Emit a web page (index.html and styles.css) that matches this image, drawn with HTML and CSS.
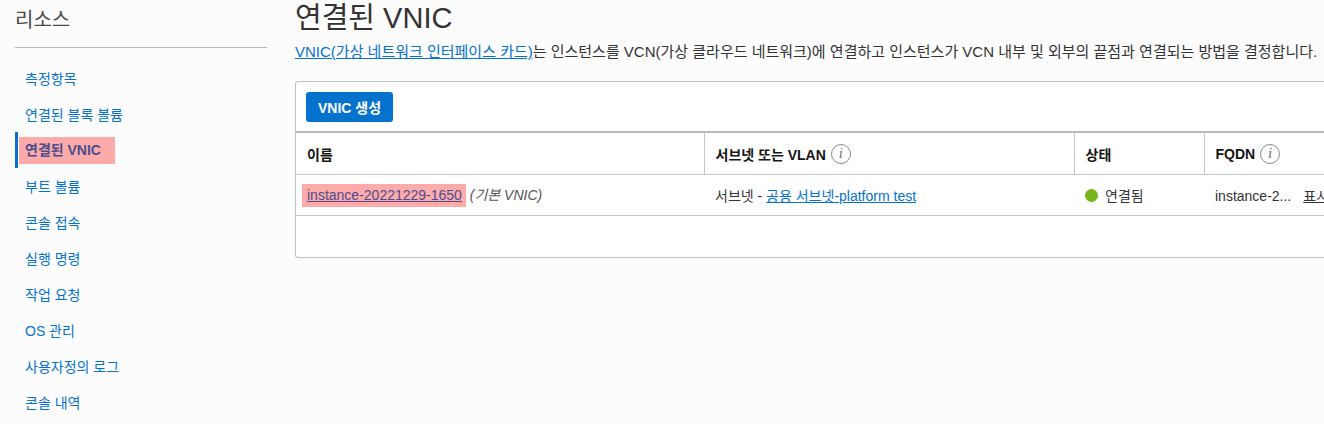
FILE: index.html
```html
<!DOCTYPE html>
<html lang="ko">
<head>
<meta charset="utf-8">
<title>연결된 VNIC</title>
<link rel="stylesheet" href="styles.css">
</head>
<body>
<div class="page">
  <aside class="sidebar">
    <h2 class="side-title">리소스</h2>
    <ul class="nav">
      <li class="nav-item"><a href="#">측정항목</a></li>
      <li class="nav-item"><a href="#">연결된 블록 볼륨</a></li>
      <li class="nav-item active"><a href="#"><span class="hl">연결된 VNIC</span></a></li>
      <li class="nav-item"><a href="#">부트 볼륨</a></li>
      <li class="nav-item"><a href="#">콘솔 접속</a></li>
      <li class="nav-item"><a href="#">실행 명령</a></li>
      <li class="nav-item"><a href="#">작업 요청</a></li>
      <li class="nav-item"><a href="#">OS 관리</a></li>
      <li class="nav-item"><a href="#">사용자정의 로그</a></li>
      <li class="nav-item"><a href="#">콘솔 내역</a></li>
    </ul>
  </aside>
  <main class="main">
    <h1 class="title">연결된 VNIC</h1>
    <p class="desc"><a href="#">VNIC(가상 네트워크 인터페이스 카드)</a>는 인스턴스를 VCN(가상 클라우드 네트워크)에 연결하고 인스턴스가 VCN 내부 및 외부의 끝점과 연결되는 방법을 결정합니다.</p>
    <section class="card">
      <div class="toolbar"><button class="btn">VNIC 생성</button></div>
      <table class="grid">
        <colgroup>
          <col class="c-name"><col class="c-subnet"><col class="c-state"><col class="c-fqdn">
        </colgroup>
        <thead>
          <tr>
            <th>이름</th>
            <th><span class="th-in">서브넷 또는 VLAN <span class="info">i</span></span></th>
            <th>상태</th>
            <th><span class="th-in">FQDN <span class="info">i</span></span></th>
          </tr>
        </thead>
        <tbody>
          <tr>
            <td><a href="#" class="hl-link">instance-20221229-1650</a> <em class="note">(기본 VNIC)</em></td>
            <td>서브넷 - <a href="#">공용 서브넷-platform test</a></td>
            <td><span class="state"><span class="dot"></span>연결됨</span></td>
            <td><span class="fqdn">instance-2...</span><a href="#" class="show">표시</a></td>
          </tr>
          <tr class="empty"><td colspan="4"></td></tr>
        </tbody>
      </table>
    </section>
  </main>
</div>
</body>
</html>
```
FILE: styles.css
```css
html, body {
  margin: 0;
  padding: 0;
  background: #fcfcfc;
  overflow: hidden;
}
body {
  font-family: "Liberation Sans", Arial, "Noto Sans CJK KR", sans-serif;
  font-size: 14px;
  color: #333333;
  width: 1324px;
  height: 424px;
}
a { color: #0572ce; }
.page {
  display: flex;
  align-items: flex-start;
}
.sidebar {
  width: 252px;
  margin-left: 15px;
  flex: none;
}
.side-title {
  margin: 0;
  padding-top: 8px;
  font-size: 20px;
  font-weight: normal;
  line-height: 24px;
  color: #4a4a4a;
  padding-bottom: 15px;
  border-bottom: 1px solid #b6bcc5;
}
.nav {
  list-style: none;
  margin: 12px 0 0;
  padding: 0;
}
.nav-item {
  height: 36px;
  display: flex;
  align-items: center;
  padding-left: 7px;
  border-left: 3px solid transparent;
}
.nav-item a {
  text-decoration: none;
  color: #0572ce;
  font-size: 14px;
}
.nav-item.active {
  border-left-color: #0572ce;
}
.nav-item.active a {
  font-weight: bold;
  color: #4b4d8c;
}
.hl {
  display: inline-block;
  background: #fdaaab;
  line-height: 27px;
  margin-left: -6px;
  padding: 0 14px 0 6px;
}
.main {
  margin-left: 28px;
  flex: none;
  width: 1100px;
}
.title {
  margin: 0;
  padding-top: 1px;
  font-size: 29px;
  line-height: 34px;
  font-weight: normal;
  color: #333333;
}
.desc {
  margin: 7px 0 0;
  font-size: 15px;
  line-height: 20px;
  white-space: nowrap;
  color: #333333;
}
.card {
  margin-top: 19px;
  background: #ffffff;
  border: 1px solid #bcc1c8;
  border-right: none;
  border-radius: 3px 0 0 3px;
  height: 175px;
}
.toolbar {
  padding: 10px 10px 9px;
}
.btn {
  display: block;
  height: 30px;
  width: 87px;
  border: none;
  border-radius: 3px;
  background: #0572ce;
  color: #ffffff;
  font-family: inherit;
  font-size: 14px;
  font-weight: bold;
  padding: 0;
}
.grid {
  width: 100%;
  border-collapse: collapse;
  table-layout: fixed;
  border-top: 2px solid #b6bbc2;
}
.c-name { width: 408px; }
.c-subnet { width: 370px; }
.c-state { width: 130px; }
.grid th {
  height: 41px;
  text-align: left;
  font-weight: bold;
  font-size: 14px;
  padding: 0 11px;
  color: #161513;
  border-bottom: 1px solid #c3c7cc;
  border-left: 1px solid #c3c7cc;
}
.grid th:first-child { border-left: none; }
.th-in {
  display: inline-flex;
  align-items: center;
  gap: 5px;
}
.info {
  display: inline-flex;
  align-items: center;
  justify-content: center;
  width: 18px;
  height: 18px;
  border: 1px solid #8a8a8a;
  border-radius: 50%;
  font-family: "Liberation Serif", serif;
  font-style: italic;
  font-weight: normal;
  font-size: 15px;
  color: #707070;
}
.grid td {
  height: 40px;
  padding: 0 11px;
  border-bottom: 1px solid #c3c7cc;
  white-space: nowrap;
  overflow: hidden;
  color: #333333;
}
.grid tr.empty td { border-bottom: none; }
.hl-link {
  display: inline-block;
  background: #fdaaab;
  color: #4b4d8c;
  line-height: 23px;
  margin-left: -5px;
  padding: 0 4px 0 5px;
}
.note {
  color: #555555;
}
.state {
  display: inline-flex;
  align-items: center;
  gap: 7px;
}
.dot {
  width: 13px;
  height: 13px;
  border-radius: 50%;
  background: #76b41c;
}
.fqdn {
  color: #333333;
  margin-right: 12px;
}
.show { color: #333333; }
```
